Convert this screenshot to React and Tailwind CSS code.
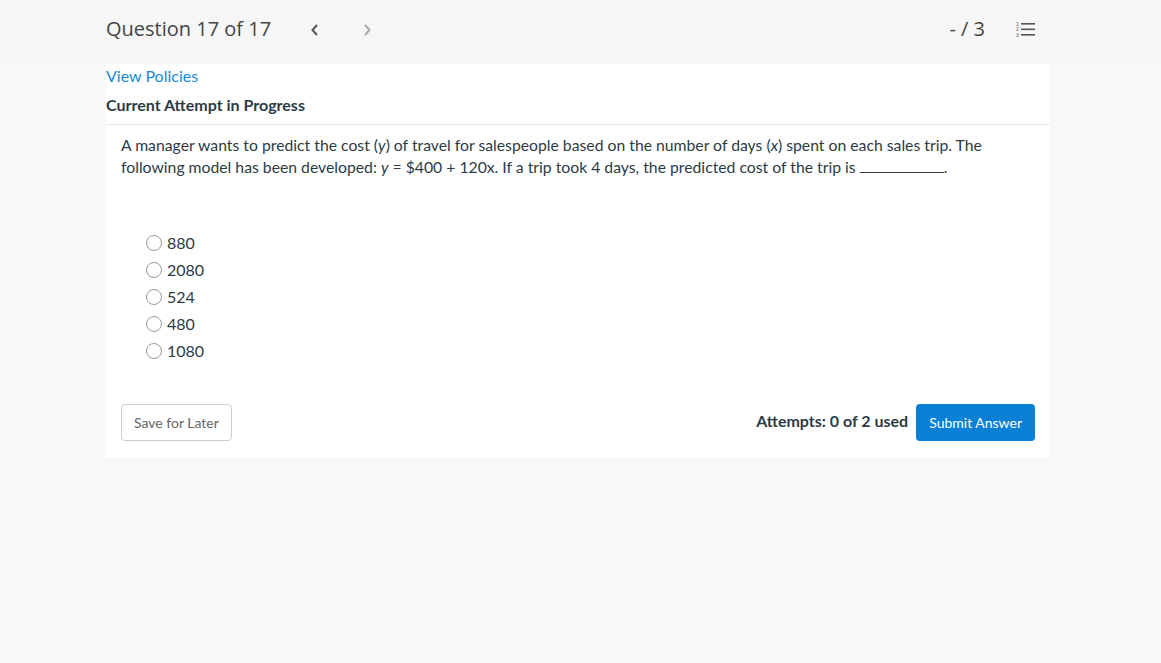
import React from 'react';

const options = ['880', '2080', '524', '480', '1080'];

function ListIcon() {
  return (
    <svg width="20" height="16" viewBox="0 0 20 16" className="text-[#555]">
      <text x="0" y="4.5" fontSize="5" fill="currentColor" fontFamily="Liberation Sans, sans-serif">1</text>
      <text x="0" y="10" fontSize="5" fill="currentColor" fontFamily="Liberation Sans, sans-serif">2</text>
      <text x="0" y="15.5" fontSize="5" fill="currentColor" fontFamily="Liberation Sans, sans-serif">3</text>
      <rect x="5" y="2" width="14" height="1.6" fill="currentColor" />
      <rect x="5" y="7.5" width="14" height="1.6" fill="currentColor" />
      <rect x="5" y="13" width="14" height="1.6" fill="currentColor" />
    </svg>
  );
}

function Chevron({ dir, color }) {
  return (
    <svg width="10" height="14" viewBox="0 0 10 14">
      <path
        d={dir === 'left' ? 'M7 2 L2.5 7 L7 12' : 'M3 2 L7.5 7 L3 12'}
        fill="none"
        stroke={color}
        strokeWidth="2"
      />
    </svg>
  );
}

export default function App() {
  return (
    <div className="min-h-[663px] bg-[#f8f8f8] font-['Lato',sans-serif] text-[#333]">
      {/* top bar */}
      <div className="h-16 bg-[#f6f6f6]">
        <div className="w-[944px] ml-[106px] h-full flex items-center">
          <h1 className="font-['Open_Sans',sans-serif] text-[20px] text-[#444] mt-[-6px]">Question 17 of 17</h1>
          <div className="ml-[39px] mt-[-5px] flex items-center gap-[42px]">
            <Chevron dir="left" color="#555" />
            <Chevron dir="right" color="#aaa" />
          </div>
          <div className="ml-auto mr-[14px] mt-[-6px] flex items-center gap-[31px]">
            <span className="font-['Open_Sans',sans-serif] text-[20px] text-[#444]">- / 3</span>
            <ListIcon />
          </div>
        </div>
      </div>

      {/* card */}
      <div className="w-[944px] ml-[106px] bg-white pb-[17px]">
        <div>
          <a href="#" className="text-[16px] text-[#1a87d6] leading-[22px]">View Policies</a>
        </div>
        <h2 className="mt-[6px] text-[16px] font-bold text-[#2d3b45] leading-[22px]">Current Attempt in Progress</h2>
        <div className="mt-[8px] border-t border-[#e6e6e6]" />

        <div className="px-[15px]">
          <p className="mt-[9px] text-[15.75px] leading-[22px] text-[#2d3b45]">
            A manager wants to predict the cost (<i>y</i>) of travel for salespeople based on the number of days (<i>x</i>) spent on each sales trip. The following model has been developed: <i>y</i> = $400 + 120x. If a trip took 4 days, the predicted cost of the trip is <span className="inline-block w-[84px] border-b border-[#2d3b45] align-baseline" />.
          </p>

          <div className="mt-[51px] ml-[25px] flex flex-col">
            {options.map((o) => (
              <label key={o} className="flex items-center h-[27px] text-[16px] text-[#2d3b45]">
                <span className="w-4 h-4 rounded-full border border-[#999] bg-white" />
                <span className="ml-[5px]">{o}</span>
              </label>
            ))}
          </div>

          <div className="mt-[40px] flex items-center">
            <button className="h-[37px] px-3 rounded border border-[#ccc] bg-white text-[14px] text-[#666]">Save for Later</button>
            <span className="ml-auto text-[16px] font-bold text-[#2d3b45] mt-[-3px]">Attempts: 0 of 2 used</span>
            <button className="ml-[8px] h-[37px] px-[13px] rounded bg-[#0a7fd6] text-[14px] text-white">Submit Answer</button>
          </div>
        </div>
      </div>
    </div>
  );
}
